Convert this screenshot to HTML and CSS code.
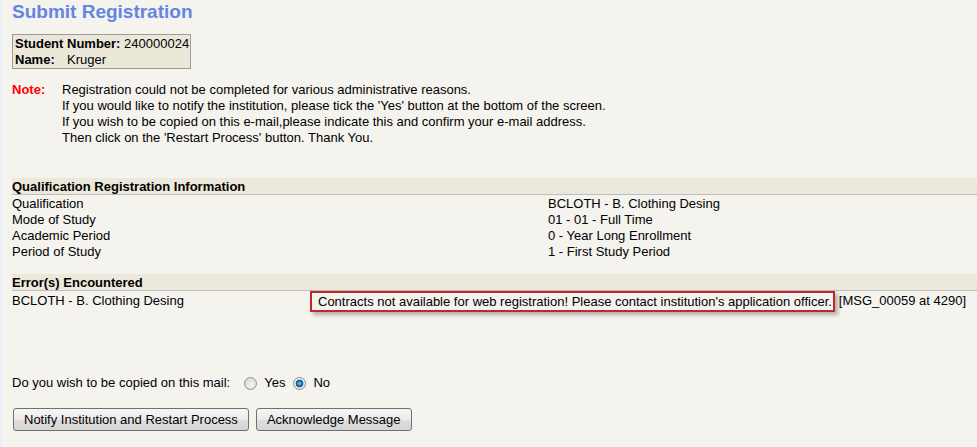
FILE: index.html
```html
<!DOCTYPE html>
<html>
<head>
<meta charset="utf-8">
<title>Submit Registration</title>
<link rel="stylesheet" href="styles.css">
</head>
<body>
<div class="page">
  <h1 class="title">Submit Registration</h1>

  <div class="student">
    <div class="student-line"><b>Student Number:</b> 240000024</div>
    <div class="student-line"><b class="student-label">Name:</b>Kruger</div>
  </div>

  <div class="note">
    <span class="note-label">Note:</span>
    <div class="note-text">
      <div>Registration could not be completed for various administrative reasons.</div>
      <div>If you would like to notify the institution, please tick the 'Yes' button at the bottom of the screen.</div>
      <div>If you wish to be copied on this e-mail,please indicate this and confirm your e-mail address.</div>
      <div>Then click on the 'Restart Process' button. Thank You.</div>
    </div>
  </div>

  <section class="section info">
    <div class="band">Qualification Registration Information</div>
    <div class="info-grid">
      <div>Qualification</div><div>BCLOTH - B. Clothing Desing</div>
      <div>Mode of Study</div><div>01 - 01 - Full Time</div>
      <div>Academic Period</div><div>0 - Year Long Enrollment</div>
      <div>Period of Study</div><div>1 - First Study Period</div>
    </div>
  </section>

  <section class="section errors">
    <div class="band">Error(s) Encountered</div>
    <div class="error-row">
      <div class="error-qual">BCLOTH - B. Clothing Desing</div>
      <div class="error-msg">
        <span class="highlight">Contracts not available for web registration! Please contact institution's application officer.</span>
        <span class="msg-code">[MSG_00059 at 4290]</span>
      </div>
    </div>
  </section>

  <div class="copy-row">
    <span class="copy-label">Do you wish to be copied on this mail:</span>
    <label class="radio-opt"><input type="radio" name="copy" class="radio"> Yes</label>
    <label class="radio-opt"><input type="radio" name="copy" class="radio" checked> No</label>
  </div>

  <div class="actions">
    <button class="btn">Notify Institution and Restart Process</button>
    <button class="btn">Acknowledge Message</button>
  </div>
</div>
</body>
</html>
```

FILE: styles.css
```css
html, body {
  margin: 0;
  padding: 0;
}

body {
  background: #f4f3ee;
  border-left: 2px solid #e9eef8;
  min-height: 447px;
  box-sizing: border-box;
  font-family: "Liberation Sans", Arial, sans-serif;
  font-size: 13px;
  color: #000;
  overflow: hidden;
}

.page {
  padding-left: 10px;
}

.title {
  margin: 0;
  font-size: 19px;
  line-height: 23px;
  font-weight: bold;
  color: #6485e2;
}

.student {
  margin-top: 11px;
  display: inline-block;
  box-sizing: border-box;
  border: 1px solid #9c9c9c;
  background: #ebe8d9;
  padding: 1px 1px 0 2px;
  line-height: 16px;
  white-space: nowrap;
}

.student-label {
  display: inline-block;
  width: 52px;
}

.note {
  margin-top: 13px;
  display: flex;
  line-height: 16px;
}

.note-label {
  width: 50px;
  flex: none;
  color: #ff0000;
  font-weight: bold;
}

.section .band {
  height: 16px;
  line-height: 17px;
  background: #ece8da;
  border-bottom: 1px solid #bdbdbd;
  font-weight: bold;
}

.info {
  margin-top: 32px;
}

.info-grid {
  display: grid;
  grid-template-columns: 536px 1fr;
  line-height: 16px;
  padding-top: 1px;
}

.errors {
  margin-top: 14px;
}

.error-row {
  display: flex;
  line-height: 16px;
}

.error-qual {
  width: 298px;
  flex: none;
  padding-top: 2px;
}

.error-msg {
  display: flex;
  align-items: flex-start;
  white-space: nowrap;
}

.highlight {
  display: inline-block;
  border: 2px solid #c0262c;
  padding: 1px 1px 0 6px;
  box-shadow: 3px 3px 4px rgba(0, 0, 0, 0.28);
}

.msg-code {
  margin-left: 4px;
  padding-top: 2px;
}

.copy-row {
  margin-top: 63px;
  display: flex;
  align-items: center;
  line-height: 16px;
}

.copy-label {
  margin-right: 6px;
}

.radio-opt {
  display: inline-flex;
  align-items: center;
  margin-left: 8px;
}

.radio {
  appearance: none;
  -webkit-appearance: none;
  margin: 0 7px 0 0;
  width: 13px;
  height: 13px;
  border-radius: 50%;
  border: 1px solid #8f8f8f;
  background: radial-gradient(circle at 60% 65%, #f4f4f4 0, #dcdcdc 70%, #cfcfcf 100%);
  box-sizing: border-box;
}

.radio:checked {
  background: radial-gradient(circle at 50% 50%, #7fd0f5 0, #1f86c6 2px, #0e4f8a 3.5px, #e8e8e8 4.2px, #f2f2f2 100%);
}

.actions {
  margin-top: 17px;
  display: flex;
  gap: 7px;
  padding-left: 1px;
}

.btn {
  height: 23px;
  padding: 0 10px;
  border: 1px solid #707070;
  border-radius: 3px;
  background: linear-gradient(#f5f5f5, #ebebeb 50%, #dedede 51%, #d4d4d4);
  font-family: "Liberation Sans", Arial, sans-serif;
  font-size: 13px;
  color: #000;
}
```
